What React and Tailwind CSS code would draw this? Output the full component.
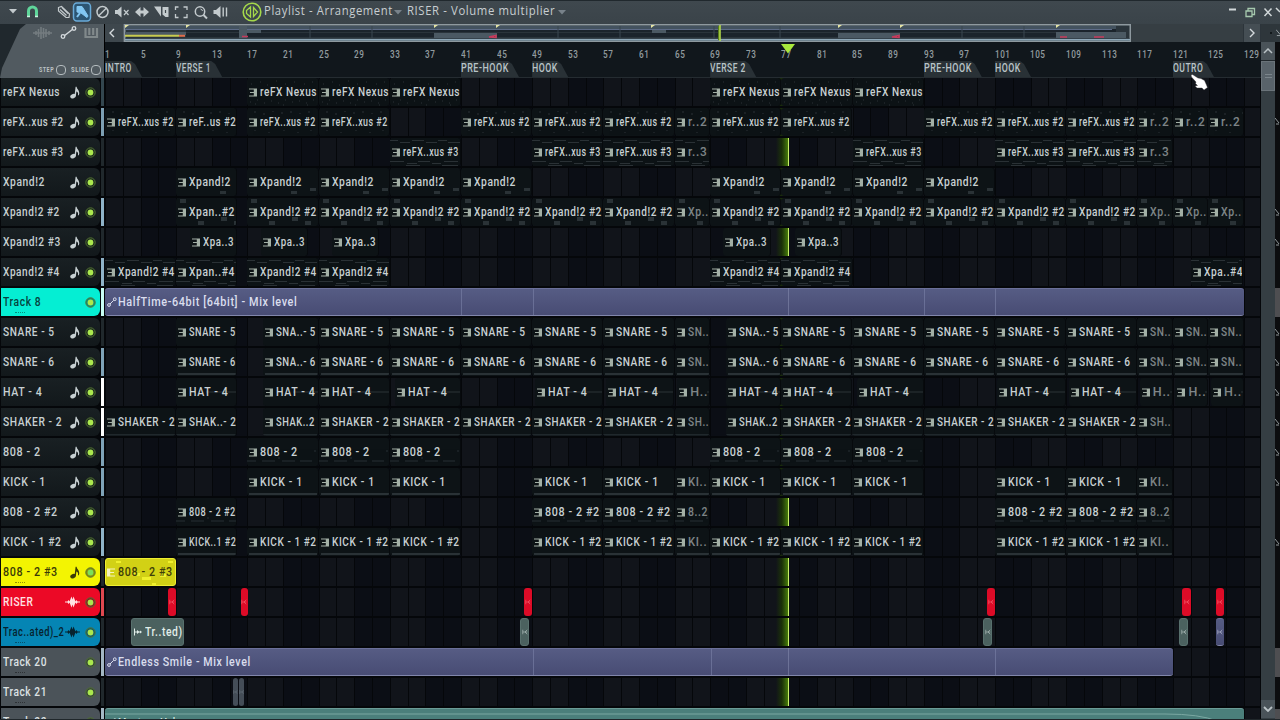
// Playlist window: toolbar, overview strip, ruler with markers and the track lanes.
import { useLayoutEffect, useRef, useState } from "react";

const BAR = 8.9; // pixels per bar

// Text squeezed (or stretched) to a fixed width, for the narrow UI face.
function FitText({ w, className = "", children }) {
  const ref = useRef(null);
  const [scale, setScale] = useState(1);

  useLayoutEffect(() => {
    const natural = ref.current.offsetWidth;
    if (natural) setScale(w / natural);
  }, [w]);

  return (
    <span className={`block shrink-0 whitespace-nowrap ${className}`} style={{ width: w }}>
      <span ref={ref} className="inline-block origin-left" style={{ transform: `scaleX(${scale})` }}>
        {children}
      </span>
    </span>
  );
}

const WIDTHS = {
  "reFX Nexus": 57, "reFX..xus #2": 56, "reFX..xus #3": 56, "reF..us #2": 47,
  "Xpand!2": 42, "Xpand!2 #2": 57, "Xpand!2 #3": 58, "Xpand!2 #4": 57, "Xpan..#2": 46, "Xpan..#4": 46, "Xpa..3": 31, "Xpa..#4": 39,
  "SNARE - 5": 52, "SNARE - 6": 52, "SNA..- 5": 40, "SNA..- 6": 40, "HAT - 4": 39,
  "SHAKER - 2": 57, "SHAK..- 2": 47, "SHAK..2": 39, "808 - 2": 38, "KICK - 1": 43,
  "808 - 2 #2": 55, "808 - 2 #3": 55, "KICK - 1 #2": 57, "KICK..1 #2": 47,
  "r..2": 19, "r..3": 19, "Xp..": 21, "SN..": 21, "H..": 18, "SH..": 21, "KI..": 19, "8..2": 20,
};

const SHORT = [65, 117, 121, 125];

// Builds the pattern clips of a lane; `extra` holds [start, length, label, width].
function clips(label, short, starts, extra = []) {
  const list = starts.map((at) => {
    const isShort = SHORT.includes(Math.floor(at));
    const end = isShort ? Math.floor(at) + 4 : (at > 68 ? 69 : 1) + (Math.floor((at - (at > 68 ? 69 : 1)) / 8) + 1) * 8;
    return { at, len: end - at, label: isShort ? short : label, dim: isShort };
  });
  extra.forEach(([at, len, text, w]) => list.push({ at, len, label: text, w }));
  return list.sort((a, b) => a.at - b.at);
}

const SNARES = [25, 33, 41, 49, 57, 65, 77, 85, 93, 101, 109, 117, 121, 125];
const KICKS = [17, 25, 33, 49, 57, 65, 69, 77, 85, 101, 109, 117];

const px = (x0, x1, rest) => ({ at: (x0 - 105) / BAR + 1, len: (x1 - x0) / BAR, ...rest });

const TRACKS = [
  { name: "reFX Nexus", meter: "bg-[#33464f]", art: "dots", clips: clips("reFX Nexus", "", [17, 25, 33, 69, 77, 85]) },
  { name: "reFX..xus #2", w: 61, meter: "bg-[#7d9fb3]", art: "specks", clips: clips("reFX..xus #2", "r..2", [1, 17, 25, 41, 49, 57, 65, 69, 77, 93, 101, 109, 117, 121, 125], [[9, 6.8, "reF..us #2"]]) },
  { name: "reFX..xus #3", w: 61, art: "dashes", clips: clips("reFX..xus #3", "r..3", [33, 49, 57, 65, 85, 101, 109, 117]) },
  { name: "Xpand!2", art: "blocks", clips: clips("Xpand!2", "", [17, 25, 33, 41, 69, 77, 85, 93], [[9, 6.8, "Xpand!2"]]) },
  { name: "Xpand!2 #2", meter: "bg-[#8fb3c8]", art: "manyblocks", clips: clips("Xpand!2 #2", "Xp..", [17, 25, 33, 41, 49, 57, 65, 69, 77, 85, 93, 101, 109, 117, 121, 125], [[9, 6.8, "Xpan..#2"]]) },
  { name: "Xpand!2 #3", clips: clips("", "", [], [10.5, 18.5, 26.5, 70.5, 78.5].map((at) => [at, 5.3, "Xpa..3"])) },
  { name: "Xpand!2 #4", meter: "bg-[#8fb3c8]", art: "dashes", clips: clips("Xpand!2 #4", "", [1, 17, 25, 69, 77], [[9, 6.8, "Xpan..#4"], [123, 5.9, "Xpa..#4"]]) },
  { name: "Track 8", w: 38, kind: "cyan", meter: "bg-[#c9fff5]", clips: [px(105, 1244.3, { label: "HalfTime-64bit [64bit] - Mix level", w: 179, kind: "auto", marks: [356, 428, 819, 890] })] },
  { name: "SNARE - 5", clips: clips("SNARE - 5", "SN..", SNARES, [[9, 6.8, "SNARE - 5", 47], [18.8, 6.2, "SNA..- 5"], [70.8, 6.2, "SNA..- 5"]]) },
  { name: "SNARE - 6", meter: "bg-[#7fa3b8]", art: "floor", clips: clips("SNARE - 6", "SN..", SNARES, [[9, 6.8, "SNARE - 6", 47], [18.8, 6.2, "SNA..- 6"], [70.8, 6.2, "SNA..- 6"]]) },
  { name: "HAT - 4", meter: "bg-white", art: "mid", clips: clips("HAT - 4", "H..", [18.8, 25, 33.6, 49.3, 57.3, 65.3, 70.8, 77, 85.5, 101.3, 109.3, 117.3, 121.3, 125.3], [[9, 6.8, "HAT - 4"]]) },
  { name: "SHAKER - 2", w: 59, meter: "bg-white", art: "thinfloor", clips: clips("SHAKER - 2", "SH..", [1, 25, 33, 41, 49, 57, 65, 77, 85, 93, 101, 109, 117], [[9, 6.8, "SHAK..- 2"], [18.8, 6.2, "SHAK..2"], [70.8, 6.2, "SHAK..2"]]) },
  { name: "808 - 2", meter: "bg-[#7fa3b8]", art: "lowdash", clips: clips("808 - 2", "", [17, 25, 33, 69, 77, 85]) },
  { name: "KICK - 1", meter: "bg-[#7fa3b8]", art: "floor", clips: clips("KICK - 1", "KI..", KICKS) },
  { name: "808 - 2 #2", art: "lowdash", clips: clips("808 - 2 #2", "8..2", [49, 57, 65, 101, 109, 117], [[9, 6.8, "808 - 2 #2", 47]]) },
  { name: "KICK - 1 #2", w: 59, meter: "bg-[#8fb3c8]", art: "floor", clips: clips("KICK - 1 #2", "KI..", KICKS, [[9, 6.8, "KICK..1 #2"]]) },
  { name: "808 - 2 #3", kind: "yellow", clips: [px(105, 176, { label: "808 - 2 #3", kind: "yellow" })] },
  { name: "RISER", w: 30, kind: "red", wave: true, meter: "bg-[#e04850]", clips: [[168, 176], [241, 247.5], [524, 532], [987, 995], [1182, 1191], [1215.5, 1224]].map(([a, b]) => px(a, b, { kind: "red" })) },
  { name: "Trac..ated)_2", w: 61, kind: "blue", wave: true, clips: [
    px(131, 184, { label: "Tr..ted)", w: 38, kind: "audio" }), px(520, 529, { kind: "audio" }), px(983, 992, { kind: "audio" }),
    px(1179, 1188, { kind: "audio" }), px(1215.5, 1224, { kind: "auto" }),
  ] },
  { name: "Track 20", w: 44, kind: "gray", meter: "bg-[#a4b8c4]", clips: [px(105, 1172.7, { label: "Endless Smile - Mix level", w: 133, kind: "auto", marks: [428, 606, 890] })] },
  { name: "Track 21", w: 44, kind: "gray", clips: [px(233, 238, { kind: "slate" }), px(239, 244.5, { kind: "slate" })] },
  { name: "Track 22", w: 44, kind: "gray", meter: "bg-[#a4b8c4]", clips: [px(105, 1244.3, { label: "Master - Volume", w: 78, kind: "teal" })] },
];

const HEADER = {
  dark: "bg-linear-to-b from-[#192023] to-[#12181b] text-[#c7d0d2]",
  cyan: "bg-[#05eed3] text-[#07423d]",
  yellow: "bg-[#f3f402] text-[#3a3b08]",
  red: "bg-[#ec0926] text-[#ffe3e4]",
  blue: "bg-[#0585b4] text-[#07222e]",
  gray: "bg-[#4b5359] text-[#dde2e4]",
};

const CLIP = {
  midi: "bg-[#0d1316] text-[#c9d1d3] border-r border-[#070a0d]",
  yellow: "bg-[#d2d115] text-[#3e3e0a] border border-[#eeee30]",
  red: "bg-[#dd0b27] text-[#ff8a90]",
  audio: "bg-[#4b615f] text-[#e2eeea] border border-[#58706d]",
  auto: "bg-linear-to-b from-[#565c84] to-[#484c74] text-[#dadeee] border-y border-t-[#6b7099] border-b-[#8186ab]",
  slate: "bg-[#444d57] text-[#78838c]",
  teal: "bg-[#4b7f7b] text-[#d8ebe6] border-t border-[#6b9b96]",
};

const NoteIcon = () => (
  <svg viewBox="0 0 10 13" className="h-[13px] w-[10px]" fill="currentColor">
    <ellipse cx="3" cy="10.2" rx="2.8" ry="2.2" transform="rotate(-20 3 10.2)" />
    <path d="M4.500 10 5.600 .8H6.600C6.600 3.400 10.600 4.600 8.800 9.200H7.900C8.600 6.800 7.400 5.800 6.400 5.400L5.800 10.400Z" />
  </svg>
);

const WaveIcon = () => (
  <svg viewBox="0 0 15 12" className="h-3 w-[15px]" fill="currentColor">
    <path d="M0 5.500H2.500L3.500 4 4.500 5.500 5.500 3 6.500 .5 7.500 3.500 8.500 .5 9.500 3 10.500 5.500 11.500 4 12.500 5.500H15V6.500H12.500L11.500 8 10.500 6.500 9.500 9 8.500 11.500 7.500 8.500 6.500 11.500 5.500 9 4.500 6.500 3.500 8 2.500 6.500H0Z" />
  </svg>
);

const PatternIcon = ({ className = "fill-[#a3b0a6]" }) => (
  <svg viewBox="0 0 8 9" className={`h-[9px] w-2 shrink-0 ${className}`}>
    <path d="M0 .5H8V8.5H0V7.4H4.8V5H1V3.9H4.8V1.6H0Z" />
  </svg>
);

const NodesIcon = () => (
  <svg viewBox="0 0 10 10" className="size-2.5 shrink-0" fill="none" stroke="currentColor">
    <circle cx="2" cy="8" r="1.4" />
    <circle cx="7.8" cy="2.2" r="1.4" />
    <path d="M3 7 6.7 3.3" />
  </svg>
);

// Note material shown faintly behind a clip's label
const ART = {
  dots: "M4 6h1M13 4h1M20 7h1M29 3h1M38 6h1M47 4h1M57 6h1M65 4h1M3 24h1M10 22h1M17 25h1M24 23h1M31 25h1M38 22h1M45 24h1M52 23h1M59 25h1M66 22h1M8 26h1M36 27h1M60 27h1",
  specks: "M8 3v2M17 5v2M26 3v1M35 4v2M44 3v2M53 5v1M62 3v2M8 22v1M22 24v1M37 22v1M51 24v1M64 22v1",
  dashes: "M0 2.500h8M10 4.500h10M22 2.500h12M36 4.500h11M48 2.500h9M58 4.500h12M0 23.500h14M17 25.500h10M28 23.500h12M42 25.500h9M54 23.500h14M16 27.500h14M52 27.500h16",
};

function ClipArt({ art }) {
  return (
    <svg className="pointer-events-none absolute inset-0 h-full w-full" stroke="#343d41" fill="#2a3236">
      {ART[art] && <path d={ART[art]} opacity={0.75} />}
      {art === "blocks" && <path d="M44 23h6v3h-6zM63 20h6v3h-6z" stroke="none" />}
      {art === "manyblocks" && <path d="M4 1h6v4H4zM22 23h6v4h-6zM45 19h6v4h-6zM58 23h6v4h-6z" stroke="none" />}
      {art === "floor" && <rect x="2" y="25" width="97%" height="2" stroke="none" />}
      {art === "thinfloor" && <rect x="0" y="26" width="100%" height="1.5" stroke="none" opacity=".7" />}
      {art === "mid" && <path d="M30 14H70" opacity={0.8} />}
      {art === "lowdash" && <path d="M0 23h9M15 23h13M35 23h13M53 23h12M31 20h2M67 13h2" opacity={0.7} />}
    </svg>
  );
}

function Clip({ clip, gap, art }) {
  const { kind = "midi", label } = clip;
  return (
    <div
      className={`relative flex h-7 shrink-0 items-center overflow-hidden rounded-[3px] ${CLIP[kind]}`}
      style={{ marginLeft: gap * BAR, width: clip.len * BAR }}
    >
      {kind === "midi" && <ClipArt art={art} />}
      {kind === "yellow" && (
        <svg className="absolute inset-0 h-full w-full" fill="#f0f02c">
          <path d="M10 2h5v2h-5zM62 2h5v2h-5zM26 14h8v3h-8zM36 18h9v3h-9zM46 24h4v3h-4zM54 15h6v3h-6z" />
        </svg>
      )}
      {clip.marks?.map((m) => (
        <i key={m} className="absolute inset-y-0 w-px bg-[#7c82a8]/60" style={{ left: m }} />
      ))}
      {kind === "teal" && (
        <svg className="absolute inset-0 h-full w-full" fill="none" stroke="#7ba8a2">
          <path d="M0 5H1060Q1095 5 1112 12" />
        </svg>
      )}
      {label ? (
        <div className={`relative flex items-center ${kind === "yellow" ? "pl-px" : "pl-0.5"}`}>
          {kind === "midi" && <PatternIcon />}
          {kind === "yellow" && <PatternIcon className="-scale-x-100 fill-[#f4f3c0]" />}
          {(kind === "auto" || kind === "teal") && <NodesIcon />}
          {kind === "audio" && (
            <svg viewBox="0 0 8 8" className="size-2 shrink-0" fill="currentColor"><path d="M0 .5h1V3.500h2V2L5 3.500H6V2.500L8 4 6 5.500V4.500H5L3 6V4.500H1v3H0z" /></svg>
          )}
          <FitText w={clip.w ?? WIDTHS[label]} className={`${kind === "auto" || kind === "teal" ? "ml-px" : "ml-[3px]"} ${clip.dim ? "opacity-60" : ""}`}>
            {label}
          </FitText>
        </div>
      ) : (
        <svg viewBox="0 0 8 10" className="mx-auto h-2.5 w-1.5 opacity-60" fill="none" stroke="currentColor">
          <path d="M1 2v6M1 5h6M7 2 4 5l3 3" />
        </svg>
      )}
    </div>
  );
}

function TrackHeader({ track }) {
  const kind = track.kind ?? "dark";
  return (
    <div className={`flex h-7 w-[99px] shrink-0 items-center rounded-r-md pl-0.5 ${HEADER[kind]}`}>
      <div className="relative">
        <FitText w={track.w ?? WIDTHS[track.name]}>{track.name}</FitText>
        {kind !== "dark" && kind !== "red" && <i className="absolute top-[18px] left-3 w-2.5 border-t border-dotted border-black/40" />}
      </div>
      <div className="ml-auto flex items-center gap-[5px] pr-[4px]">
        {kind !== "cyan" && kind !== "gray" && (track.wave ? <WaveIcon /> : <NoteIcon />)}
        <svg viewBox="0 0 11 11" className="size-[11px]">
          <circle cx="5.5" cy="5.5" r="4.7" fill="#203119" fillOpacity=".5" stroke="#527234" />
          <circle cx="5.5" cy="5.5" r="2.9" fill={kind === "yellow" ? "#7ce058" : "#abe84e"} />
        </svg>
      </div>
    </div>
  );
}

function Lane({ track }) {
  let cursor = 1;
  return (
    <div className="relative flex w-[1155px] shrink-0 bg-[repeating-linear-gradient(90deg,#05070a_0_1px,transparent_1px_17.8px),repeating-linear-gradient(90deg,#11141a_0_35.6px,#0b0e15_35.6px_71.2px)] overflow-hidden">
      <i className="absolute inset-y-0 left-[671px] w-[13px] border-r border-[#c8f06b] bg-linear-to-r from-transparent via-[#1c3308] to-[#477c08]" />
      {track.clips.map((clip) => {
        const gap = clip.at - cursor;
        cursor = clip.at + clip.len;
        return <Clip key={clip.at} clip={clip} gap={gap} art={track.art} />;
      })}
      {track.clips[0].kind === "auto" && <i className="absolute inset-y-0 left-[683px] w-px bg-[#8b91b3]/50" />}
    </div>
  );
}

const Caret = ({ className = "" }) => (
  <svg viewBox="0 0 8 5" className={`h-[5px] w-2 ${className}`} fill="currentColor"><path d="M0 0H8L4 4.5Z" /></svg>
);

function Toolbar() {
  return (
    <header className="flex h-6 items-center border-t border-[#20282d] bg-linear-to-b from-[#3f484e] to-[#3a4349] pb-0.5 text-[#c3cacd]">
      <Caret className="ml-[9px]" />
      <svg viewBox="0 0 208 20" className="ml-[6px] h-5 w-[208px] shrink-0" fill="none" stroke="currentColor" strokeWidth="1.5">
        {/* magnet */}
        <path d="M5.500 15V9A4 4 0 0 1 13.500 9V15" stroke="#5fd59a" strokeWidth="3" />
        <path d="M4 14.500h3M12 14.500h3" stroke="#c9f5e0" strokeWidth="1.500" />
        {/* pencil */}
        <path d="M35.500 5.500 38.500 4.500 46.500 12 46 15.500 43 15.500 35.500 9ZM37 7.500l6.500 6M39 5.500l6 6" strokeWidth="1.200" />
        {/* brush */}
        <rect x="50.500" y="1" width="17" height="18" rx="3.500" fill="#2c5572" stroke="#69abd9" />
        <path d="M54 4.500h5l2 3 4 6.500-1 1.500-6-4.500-4-1Z" fill="#82c7f2" stroke="#82c7f2" strokeWidth="1" />
        <path d="M54 15l3-4" stroke="#82c7f2" strokeWidth="2" />
        {/* delete */}
        <circle cx="79.500" cy="10" r="5.500" />
        <path d="M75.500 14 83.500 6" />
        {/* mute */}
        <path d="M92 8h2.500l4-3.500v11l-4-3.500H92Z" fill="currentColor" stroke="none" />
        <path d="M101 8l4.500 5M105.500 8l-4.500 5" strokeWidth="1.200" />
        {/* slip */}
        <path d="M112 10l5.500-5v3.500h3V5l5.500 5-5.500 5v-3.500h-3v3.500Z" fill="currentColor" stroke="none" />
        {/* slice */}
        <path d="M131 4.500h7v10ZM139.500 5h6V15h-3l-3-2.500Z" fill="currentColor" stroke="none" />
        <path d="M142.500 8v3" stroke="#3d464c" strokeWidth="1.200" />
        {/* select */}
        <path d="M152.500 8V5H155.500M160.500 5H164V8M164 12v3.500h-3.500M155.500 15.500h-3V12" strokeWidth="1.300" />
        {/* zoom */}
        <circle cx="177" cy="9.500" r="4.700" />
        <path d="M180.500 13l3.500 3.500" strokeWidth="2" />
        <path d="M177.500 7a2.500 2.500 0 0 1 2 2" strokeWidth="1" />
        {/* preview */}
        <path d="M190.500 8h2.500l4.500-4v12l-4.500-4h-2.500Z" fill="currentColor" stroke="none" />
        <path d="M200.200 5.500v9M203.500 5.500v9" strokeWidth="1.400" />
      </svg>
      <svg viewBox="0 0 20 20" className="ml-[11px] size-5" fill="none" stroke="#a5d94a" strokeWidth="1.6">
        <circle cx="10" cy="10" r="8.800" />
        <path d="M8.500 5v10L4.500 11.500v-3ZM11.500 5.500v9l4-4.500Z" strokeWidth="1.300" />
      </svg>
      <div className="ml-[2px] flex items-center pb-[3px] font-['Open_Sans',sans-serif] text-[13px] text-[#c8ced1]">
        <FitText w={129}>Playlist - Arrangement</FitText>
        <Caret className="mt-1 mr-[5px] ml-px text-[#78828a]" />
        <FitText w={148}>RISER - Volume multiplier</FitText>
        <Caret className="mt-1 ml-[3px] text-[#78828a]" />
      </div>
      <svg viewBox="0 0 52 14" className="ml-auto h-3.5 w-[52px] shrink-0" fill="none" stroke="#d2d8da" strokeWidth="1.500">
        <path d="M1 4.500H8" strokeWidth="2" />
        <path d="M18 6h6v5.500h-6ZM20 5.500V3.500h6.500v6H24" stroke="#a6c9ae" strokeWidth="1.300" />
        <path d="M36.500 3.500 43.500 11M43.500 3.500 36.500 11M48 3l4 4" />
      </svg>
    </header>
  );
}

function Overview() {
  return (
    <div className="flex h-[18px] w-full items-stretch bg-[#363e43]">
      <div className="flex w-[19px] items-center justify-center border-r border-[#596269] bg-[#3e474d] pr-1 text-[#d5dadd]">
        <svg viewBox="0 0 6 10" className="h-2.5 w-1.5" fill="none" stroke="currentColor" strokeWidth="1.4"><path d="M5 1 1 5l4 4" /></svg>
      </div>
      <svg viewBox="0 0 1007 18" className="h-[18px] w-[1007px]">
        <rect x=".75" y=".75" width="1005.500" height="16.500" fill="#2a343b" stroke="#8e999f" strokeWidth="1.500" />
        <path d="M62 3H992V8H62ZM62 9H932V13H62Z" fill="#1b242c" />
        <path d="M1 2H992V5H1ZM1 14.500H1006V16.500H1Z" fill="#43525f" />
        <path d="M1 5.500H988" stroke="#5d6b87" />
        <path d="M1 15.800H1006" stroke="#8ea8b8" strokeWidth="1.500" />
        <path d="M1 8H62V11H1ZM115 2h8v12h-8zM123 6h14v3h-14zM310 9h63v5h-63zM528 6h14v3h-14zM714 9h62v5h-62zM932 8h70v6h-70z" fill="#4b5963" />
        <path d="M1 11.800H55" stroke="#c9cc4f" strokeWidth="2" />
        <path d="M55 11.800h6" stroke="#e06c4b" strokeWidth="2" />
        <path d="M118 12.500h6M980 13h-10M943 13h-7M365 13l7-1.500v2ZM768 13l7-1.500v2Z" stroke="#c63b5c" strokeWidth="1.600" />
        <path d="M186 2v12M248 2v12M434 2v12M496 2v12M590 2v12M656 2v12M838 2v12M900 2v12" stroke="#3a4751" />
        <path d="M1 1h4l-4 3ZM62 1h4l-4 3ZM310 1h4l-4 3ZM372 1h4l-4 3ZM527 1h4l-4 3ZM714 1h4l-4 3ZM776 1h4l-4 3ZM932 1h4l-4 3Z" fill="#e8e6a4" />
        <path d="M594 2h2v14h-2z" fill="#587c1c" />
        <path d="M596 1v16" stroke="#b8e04a" strokeWidth="1.500" />
      </svg>
      <div className="ml-auto flex w-[18px] items-center justify-center border-x border-[#2c343a] bg-[#454e54] text-[#d5dadd]">
        <svg viewBox="0 0 6 10" className="h-2.5 w-1.5" fill="none" stroke="currentColor" strokeWidth="1.4"><path d="M1 1l4 4-4 4" /></svg>
      </div>
    </div>
  );
}

const NUMBERS = Array.from({ length: 33 }, (_, i) => 1 + i * 4);

const MARKERS = [
  { at: 1, text: "INTRO", w: 27, tab: 37 },
  { at: 9, text: "VERSE 1", w: 35, tab: 46 },
  { at: 41, text: "PRE-HOOK", w: 48, tab: 58 },
  { at: 49, text: "HOOK", w: 26, tab: 36 },
  { at: 69, text: "VERSE 2", w: 36, tab: 46 },
  { at: 93, text: "PRE-HOOK", w: 48, tab: 58 },
  { at: 101, text: "HOOK", w: 26, tab: 36 },
  { at: 121, text: "OUTRO", w: 30, tab: 41 },
];

function Ruler() {
  let x = 0;
  return (
    <div className="relative h-9 border-b border-[#252c31] bg-[#11171c]">
      <div className="flex h-[19px] items-end overflow-hidden text-[11px] leading-[13px] text-[#929b9f]">
        {NUMBERS.map((n) => (
          <div key={n} className="w-[35.6px] shrink-0">
            <FitText w={String(n).length * 5.2}>{n}</FitText>
          </div>
        ))}
      </div>
      <div className="flex h-4 text-[12.5px] leading-[14px] text-[#b9c4c8]">
        {MARKERS.map((m) => {
          const left = (m.at - 1) * BAR;
          const gap = left - x;
          x = left + m.tab;
          return (
            <div
              key={m.at}
              className="shrink-0 bg-[#293136] [clip-path:polygon(0_0,calc(100%-11px)_0,calc(100%-7px)_3px,100%_100%,0_100%)]"
              style={{ marginLeft: gap, width: m.tab }}
            >
              <FitText w={m.w}>{m.text}</FitText>
            </div>
          );
        })}
      </div>
      <svg viewBox="0 0 14 10" className="absolute top-[2px] left-[676px] h-2.5 w-3.5" fill="#a9e83c"><path d="M0 0H14L7 9.500Z" /></svg>
    </div>
  );
}

function CornerPanel() {
  return (
    <div className="h-[54px] w-[105px] shrink-0 border-r border-black bg-[#20282d]">
      <div className="flex h-full flex-col justify-between bg-[#515a60] [clip-path:polygon(26px_0,100%_0,100%_100%,0_100%,2px_44px,20px_5px)]">
        <svg viewBox="0 0 104 18" className="h-[18px] w-[104px]" fill="none">
          <path d="M33 9H52M36 7v4M38.500 5v8M41 3v12M43.500 4v10M46 5v8M49 7v4" stroke="#747c80" strokeWidth="1.600" />
          <path d="M64 12 73 5" stroke="#d4dadd" strokeWidth="1.500" />
          <circle cx="63" cy="12.500" r="1.800" stroke="#d4dadd" strokeWidth="1.300" />
          <circle cx="74" cy="4.500" r="1.800" stroke="#d4dadd" strokeWidth="1.300" />
          <path d="M85.500 4v9h11.500V4M89.300 4v7M93.200 4v7" stroke="#81898b" strokeWidth="2.200" />
        </svg>
        <div className="flex items-center justify-end gap-[2px] pr-[3px] pb-0.5 text-[7.5px] leading-3 font-bold text-[#bcc2c4]">
          <FitText w={15}>STEP</FitText>
          <i className="size-2.5 rounded-[4px] border border-[#b4bbbe]" />
          <FitText w={18} className="ml-[3px]">SLIDE</FitText>
          <i className="size-2.5 rounded-[4px] border border-[#b4bbbe]" />
        </div>
      </div>
    </div>
  );
}

function ScrollColumn() {
  return (
    <div className="flex h-[678px] w-[14px] shrink-0 flex-col bg-[#353e43] text-[#b9c1c5]">
      <div className="flex h-[19px] items-center justify-center border-b border-[#20272b] bg-[#4a5359]">
        <svg viewBox="0 0 10 6" className="h-1.5 w-2.5" fill="none" stroke="currentColor" strokeWidth="1.5"><path d="M1 5l4-4 4 4" /></svg>
      </div>
      <div className="flex h-[30px] flex-col items-center justify-center gap-0.5 border border-[#6a7379] bg-[#59636a]">
        <i className="h-px w-[7px] bg-[#7b858b]" />
        <i className="h-px w-[7px] bg-[#7b858b]" />
      </div>
      <div className="mt-auto mb-0.5 flex h-[18px] items-center justify-center bg-[#4a5359]">
        <svg viewBox="0 0 10 6" className="h-1.5 w-2.5" fill="none" stroke="currentColor" strokeWidth="1.8"><path d="M1 1l4 4 4-4" /></svg>
      </div>
    </div>
  );
}

// Sliver of the window lying behind, visible at the right edge
function BackWindow() {
  return (
    <svg viewBox="0 0 5 678" className="h-[678px] w-[5px] shrink-0">
      <rect width="5" height="678" fill="#0c0d0f" />
      <path d="M0 246h5v29H0zM0 606h5v29H0zM0 667h5v11H0z" fill="#4e4e51" />
      {[79, 170, 200, 290, 320, 350, 380, 410, 440, 500].map((y) => (
        <path key={y} d={`M0 ${y - 3}l4 5M1 ${y + 3}h3`} stroke="#8f9799" />
      ))}
    </svg>
  );
}

export default function App() {
  return (
    <div className="relative flex h-[720px] w-[1280px] flex-col overflow-hidden bg-[#05070a] font-[Roboto,sans-serif] text-[12.5px] leading-4 font-medium tracking-[0.7px]">
      <Toolbar />
      <div className="flex">
        <div className="w-[1261px] shrink-0">
          <div className="flex">
            <CornerPanel />
            <div className="w-[1156px]">
              <Overview />
              <Ruler />
            </div>
          </div>
          <div className="flex h-[642px] flex-col gap-0.5 overflow-hidden">
            {TRACKS.map((track) => (
              <div key={track.name} className="flex h-7 shrink-0 pl-px">
                <TrackHeader track={track} />
                <i className={`mr-px ml-px w-[3px] shrink-0 ${track.meter ?? "bg-[#20282c]"}`} />
                <Lane track={track} />
              </div>
            ))}
          </div>
        </div>
        <div className="w-[19px]">
          <div className="flex h-[18px] items-center gap-1 bg-[#2e363b] pl-[9px] text-[#aab2b5]">
            <i className="size-0.5 bg-[#11171a]" />
            <svg viewBox="0 0 5 8" className="h-2 w-[5px]" fill="none" stroke="currentColor"><path d="M0 0l5 6M1 7h4" /></svg>
          </div>
          <div className="flex">
            <ScrollColumn />
            <BackWindow />
          </div>
        </div>
      </div>
      <i className="absolute inset-x-0 bottom-0 h-px bg-[#20272b]" />
      <svg viewBox="0 0 18 17" className="absolute top-[74px] left-[1190px] h-[17px] w-[18px]">
        <path d="M1 1 2.500.500 8 4 11 4.500 14.500 6.500 16.500 11 17.500 13.500 14 16 12 14 7 14 5 12 7.500 11.500 5.500 9.500 6 8 1.500 3Z" fill="#fff" stroke="#333" strokeWidth=".4" />
      </svg>
    </div>
  );
}
